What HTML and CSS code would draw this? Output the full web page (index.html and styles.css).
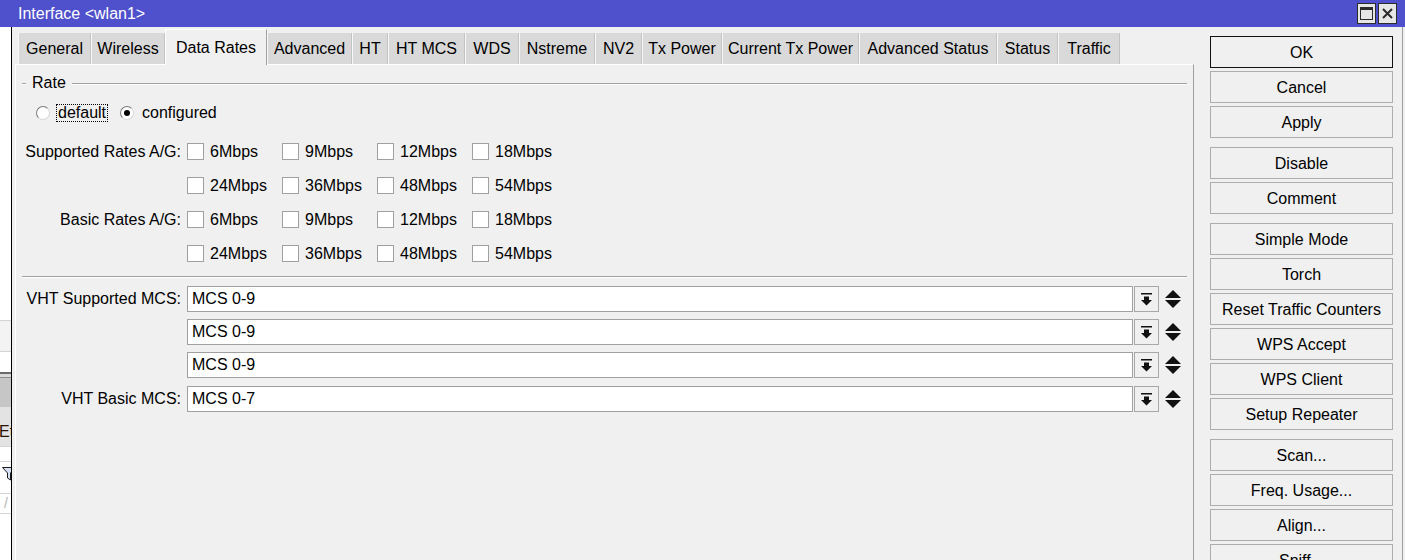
FILE: index.html
```html
<!DOCTYPE html>
<html lang="en">
<head>
    <meta charset="UTF-8">
    <title>Interface &lt;wlan1&gt;</title>
    <link rel="stylesheet" href="styles.css">
</head>
<body>
    <div class="titlebar">
        <span class="title">Interface &lt;wlan1&gt;</span>
        <div class="win-btns">
            <span class="win-btn">
                <svg width="13" height="13" viewBox="0 0 13 13"><rect x="0.5" y="0.5" width="12" height="12" fill="none" stroke="#2b2b2b"/><rect x="0" y="0" width="13" height="3" fill="#2b2b2b"/></svg>
            </span>
            <span class="win-btn">
                <svg width="11" height="11" viewBox="0 0 11 11"><path d="M1 1 L10 10 M10 1 L1 10" stroke="#2b2b2b" stroke-width="2"/></svg>
            </span>
        </div>
    </div>

    <div class="main">
        <!-- window lying behind the dialog -->
        <div class="behind">
            <div class="bh-white" style="height: 293px"></div>
            <div class="bh-row" style="height: 31px"></div>
            <div class="bh-row bh-plain" style="height: 21px"></div>
            <div class="bh-dark"></div>
            <div class="bh-gray"></div>
            <div class="bh-tab">Et</div>
            <div class="bh-row bh-plain" style="height: 15px"></div>
            <div class="bh-row bh-plain" style="height: 32px">
                <svg class="funnel" width="14" height="14" viewBox="0 0 14 14"><path d="M0.5 0.5 L13.5 0.5 L8.5 6 L8.5 13 L5.5 11 L5.5 6 Z" fill="#d6e2f4" stroke="#1c1c1c"/></svg>
            </div>
            <div class="bh-row bh-plain bh-slash" style="height: 20px">/</div>
            <div class="bh-row bh-plain" style="height: 30px"></div>
            <div class="bh-white" style="height: 20px"></div>
        </div>

        <div class="window">
            <div class="tabs-col">
                <div class="tabs">
                    <span class="tab">General</span>
                    <span class="tab">Wireless</span>
                    <span class="tab active">Data Rates</span>
                    <span class="tab">Advanced</span>
                    <span class="tab">HT</span>
                    <span class="tab">HT MCS</span>
                    <span class="tab">WDS</span>
                    <span class="tab">Nstreme</span>
                    <span class="tab">NV2</span>
                    <span class="tab">Tx Power</span>
                    <span class="tab">Current Tx Power</span>
                    <span class="tab">Advanced Status</span>
                    <span class="tab">Status</span>
                    <span class="tab">Traffic</span>
                </div>

                <div class="panel">
                    <div class="group-title">
                        <span class="etch dash"></span>
                        <span class="group-name">Rate</span>
                        <span class="etch rule"></span>
                    </div>

                    <div class="radio-row">
                        <span class="radio"></span>
                        <span class="radio-label focused">default</span>
                        <span class="radio checked"></span>
                        <span class="radio-label">configured</span>
                    </div>

                    <div class="rates">
                        <div class="form-row">
                            <span class="lbl">Supported Rates A/G:</span>
                            <div class="checks">
                                <span class="chk"><span class="box"></span>6Mbps</span>
                                <span class="chk"><span class="box"></span>9Mbps</span>
                                <span class="chk"><span class="box"></span>12Mbps</span>
                                <span class="chk"><span class="box"></span>18Mbps</span>
                            </div>
                        </div>
                        <div class="form-row">
                            <span class="lbl"></span>
                            <div class="checks">
                                <span class="chk"><span class="box"></span>24Mbps</span>
                                <span class="chk"><span class="box"></span>36Mbps</span>
                                <span class="chk"><span class="box"></span>48Mbps</span>
                                <span class="chk"><span class="box"></span>54Mbps</span>
                            </div>
                        </div>
                        <div class="form-row">
                            <span class="lbl">Basic Rates A/G:</span>
                            <div class="checks">
                                <span class="chk"><span class="box"></span>6Mbps</span>
                                <span class="chk"><span class="box"></span>9Mbps</span>
                                <span class="chk"><span class="box"></span>12Mbps</span>
                                <span class="chk"><span class="box"></span>18Mbps</span>
                            </div>
                        </div>
                        <div class="form-row">
                            <span class="lbl"></span>
                            <div class="checks">
                                <span class="chk"><span class="box"></span>24Mbps</span>
                                <span class="chk"><span class="box"></span>36Mbps</span>
                                <span class="chk"><span class="box"></span>48Mbps</span>
                                <span class="chk"><span class="box"></span>54Mbps</span>
                            </div>
                        </div>
                    </div>

                    <div class="etch sep"></div>

                    <div class="mcs">
                        <div class="mcs-row">
                            <span class="lbl">VHT Supported MCS:</span>
                            <span class="field">MCS 0-9</span>
                            <span class="drop"><svg width="11" height="13" viewBox="0 0 11 13"><rect x="0" y="0" width="11" height="1.5" fill="#111"/><rect x="3" y="3.5" width="5" height="4" fill="#111"/><path d="M0 7 L11 7 L5.5 12.5 Z" fill="#111"/></svg></span>
                            <span class="spin"><svg width="16" height="18" viewBox="0 0 16 18"><path d="M8 0 L16 8 L0 8 Z M0 10 L16 10 L8 18 Z" fill="#111"/></svg></span>
                        </div>
                        <div class="mcs-row">
                            <span class="lbl"></span>
                            <span class="field">MCS 0-9</span>
                            <span class="drop"><svg width="11" height="13" viewBox="0 0 11 13"><rect x="0" y="0" width="11" height="1.5" fill="#111"/><rect x="3" y="3.5" width="5" height="4" fill="#111"/><path d="M0 7 L11 7 L5.5 12.5 Z" fill="#111"/></svg></span>
                            <span class="spin"><svg width="16" height="18" viewBox="0 0 16 18"><path d="M8 0 L16 8 L0 8 Z M0 10 L16 10 L8 18 Z" fill="#111"/></svg></span>
                        </div>
                        <div class="mcs-row">
                            <span class="lbl"></span>
                            <span class="field">MCS 0-9</span>
                            <span class="drop"><svg width="11" height="13" viewBox="0 0 11 13"><rect x="0" y="0" width="11" height="1.5" fill="#111"/><rect x="3" y="3.5" width="5" height="4" fill="#111"/><path d="M0 7 L11 7 L5.5 12.5 Z" fill="#111"/></svg></span>
                            <span class="spin"><svg width="16" height="18" viewBox="0 0 16 18"><path d="M8 0 L16 8 L0 8 Z M0 10 L16 10 L8 18 Z" fill="#111"/></svg></span>
                        </div>
                        <div class="mcs-row">
                            <span class="lbl">VHT Basic MCS:</span>
                            <span class="field">MCS 0-7</span>
                            <span class="drop"><svg width="11" height="13" viewBox="0 0 11 13"><rect x="0" y="0" width="11" height="1.5" fill="#111"/><rect x="3" y="3.5" width="5" height="4" fill="#111"/><path d="M0 7 L11 7 L5.5 12.5 Z" fill="#111"/></svg></span>
                            <span class="spin"><svg width="16" height="18" viewBox="0 0 16 18"><path d="M8 0 L16 8 L0 8 Z M0 10 L16 10 L8 18 Z" fill="#111"/></svg></span>
                        </div>
                    </div>
                </div>
            </div>

            <div class="buttons">
                <button class="btn default">OK</button>
                <button class="btn">Cancel</button>
                <button class="btn">Apply</button>

                <button class="btn group">Disable</button>
                <button class="btn">Comment</button>

                <button class="btn group">Simple Mode</button>
                <button class="btn">Torch</button>
                <button class="btn">Reset Traffic Counters</button>
                <button class="btn">WPS Accept</button>
                <button class="btn">WPS Client</button>
                <button class="btn">Setup Repeater</button>

                <button class="btn group">Scan...</button>
                <button class="btn">Freq. Usage...</button>
                <button class="btn">Align...</button>
                <button class="btn">Sniff...</button>
            </div>
        </div>
    </div>
</body>
</html>
```

FILE: styles.css
```css
* {
    box-sizing: border-box;
}

body {
    margin: 0;
    width: 1405px;
    height: 560px;
    overflow: hidden;
    background-color: #f0f0f0;
    font-family: "Liberation Sans", Arial, sans-serif;
    font-size: 16px;
    color: #000;
}

/* title bar */
.titlebar {
    height: 27px;
    background-color: #4f50cc;
    display: flex;
    align-items: center;
    justify-content: space-between;
    padding-left: 18px;
    padding-right: 8px;
}

.title {
    color: #fff;
    line-height: 27px;
}

.win-btns {
    display: flex;
    gap: 2px;
}

.win-btn {
    width: 19px;
    height: 21px;
    border: 1px solid #2b2b2b;
    background-color: #e6e6e6;
    display: flex;
    align-items: center;
    justify-content: center;
}

.main {
    display: flex;
    height: 533px;
}

/* the other window peeking out on the left */
.behind {
    width: 11px;
    flex-shrink: 0;
    display: flex;
    flex-direction: column;
    overflow: hidden;
    background-color: #fff;
}

.bh-white {
    background-color: #fff;
    flex-shrink: 0;
}

.bh-row {
    flex-shrink: 0;
    background-color: #f3f3f3;
    border-top: 1px solid #d4d4d4;
}

.bh-plain {
    background-color: #fff;
}

.bh-dark {
    height: 6px;
    flex-shrink: 0;
    border-top: 2px solid #6a6a6a;
    border-bottom: 1px solid #8c8c8c;
    background-color: #dadada;
}

.bh-gray {
    height: 29px;
    flex-shrink: 0;
    background-color: #c6c6c6;
}

.bh-tab {
    height: 39px;
    flex-shrink: 0;
    background-color: #e3e3e3;
    color: #2a1200;
    padding-top: 16px;
    line-height: 18px;
    margin-left: -1px;
    white-space: nowrap;
}

.funnel {
    display: block;
    margin: 5px 0 0 2px;
}

.bh-slash {
    color: #b4b4b4;
    font-size: 14px;
    padding-left: 4px;
    line-height: 18px;
}

/* dialog window */
.window {
    flex: 1;
    display: flex;
    border-left: 1px solid #000;
    border-right: 1px solid #a0a0a0;
    margin-right: 2px;
    padding-left: 3px;
    background-color: #f0f0f0;
}

.tabs-col {
    width: 1179px;
    flex-shrink: 0;
    display: flex;
    flex-direction: column;
    padding-top: 2px;
}

.tabs {
    display: flex;
    align-items: flex-end;
    height: 35px;
    padding-left: 3px;
}

.tab {
    height: 31px;
    line-height: 31px;
    text-align: center;
    background-color: #d9d9d9;
    border-left: 1px solid #f7f7f7;
    border-right: 1px solid #c3c3c3;
    white-space: nowrap;
    flex-shrink: 0;
}

/* tab widths as measured on the dialog */
.tab:nth-child(1) { width: 73px; }
.tab:nth-child(2) { width: 74px; }
.tab:nth-child(3) { width: 102px; }
.tab:nth-child(4) { width: 85px; }
.tab:nth-child(5) { width: 36px; }
.tab:nth-child(6) { width: 77px; }
.tab:nth-child(7) { width: 54px; }
.tab:nth-child(8) { width: 76px; }
.tab:nth-child(9) { width: 47px; }
.tab:nth-child(10) { width: 80px; }
.tab:nth-child(11) { width: 137px; }
.tab:nth-child(12) { width: 138px; }
.tab:nth-child(13) { width: 61px; }
.tab:nth-child(14) { width: 62px; }

.tab.active {
    height: 36px;
    margin-bottom: -1px;
    padding-top: 2px;
    line-height: 32px;
    background-color: #f0f0f0;
    border-top: 1px solid #fff;
    border-left: 1px solid #fff;
    border-right: 1px solid #a0a0a0;
    position: relative;
    z-index: 1;
}

.panel {
    flex: 1;
    border-top: 1px solid #fff;
    border-left: 1px solid #fff;
    border-right: 1px solid #a0a0a0;
    padding: 9px 6px 0 6px;
}

/* etched line: dark on top, light below */
.etch {
    height: 2px;
    border-top: 1px solid #a0a0a0;
    border-bottom: 1px solid #fff;
}

.group-title {
    display: flex;
    align-items: center;
    height: 18px;
}

.group-title .etch {
    margin-top: 2px;
}

.dash {
    width: 4px;
}

.group-name {
    margin-left: 6px;
    line-height: 18px;
}

.rule {
    flex: 1;
    margin-left: 6px;
}

.radio-row {
    display: flex;
    align-items: center;
    height: 18px;
    margin-top: 12px;
    padding-left: 14px;
}

.radio {
    width: 14px;
    height: 14px;
    border-radius: 50%;
    background-color: #fff;
    border: 1px solid;
    border-color: #7c7c7c #d8d8d8 #d8d8d8 #7c7c7c;
    display: flex;
    align-items: center;
    justify-content: center;
}

.radio.checked::after {
    content: "";
    width: 6px;
    height: 6px;
    border-radius: 50%;
    background-color: #000;
}

.radio-label {
    margin-left: 6px;
    margin-right: 12px;
    padding: 0 1px;
    line-height: 16px;
    border: 1px solid transparent;
}

.radio-label.focused {
    border: 1px dotted #000;
}

.rates {
    margin-top: 21px;
    display: flex;
    flex-direction: column;
    gap: 17px;
}

.form-row {
    display: flex;
    align-items: center;
    height: 17px;
}

.lbl {
    width: 159px;
    flex-shrink: 0;
    margin-right: 6px;
    text-align: right;
    white-space: nowrap;
}

.checks {
    display: flex;
}

.chk {
    width: 95px;
    display: flex;
    align-items: center;
    gap: 6px;
    line-height: 17px;
}

.box {
    width: 17px;
    height: 17px;
    border: 1px solid #a0a0a0;
    background-color: #fff;
}

.sep {
    margin-top: 14px;
}

.mcs {
    margin-top: 8px;
    display: flex;
    flex-direction: column;
    gap: 7px;
}

.mcs-row {
    display: flex;
    align-items: center;
    height: 26px;
    padding-right: 6px;
}

.mcs-row:last-child {
    margin-top: 1px;
}

.field {
    flex: 1;
    height: 26px;
    line-height: 24px;
    padding-left: 4px;
    background-color: #fff;
    border: 1px solid #a0a0a0;
}

.drop {
    width: 25px;
    height: 26px;
    margin-left: 1px;
    border: 1px solid #a8a8a8;
    background-color: #f0f0f0;
    display: flex;
    align-items: center;
    justify-content: center;
}

.spin {
    width: 16px;
    margin-left: 6px;
    display: flex;
}

/* right-hand button column */
.buttons {
    width: 183px;
    flex-shrink: 0;
    margin-left: 16px;
    padding-top: 9px;
    display: flex;
    flex-direction: column;
    gap: 3px;
}

.btn {
    height: 32px;
    flex-shrink: 0;
    font-family: inherit;
    font-size: 16px;
    color: #000;
    background-color: #f0f0f0;
    border: 1px solid #adadad;
    padding: 1px 0 0;
}

.btn.default {
    border-color: #111;
}

.btn.group {
    margin-top: 6px;
}
```
